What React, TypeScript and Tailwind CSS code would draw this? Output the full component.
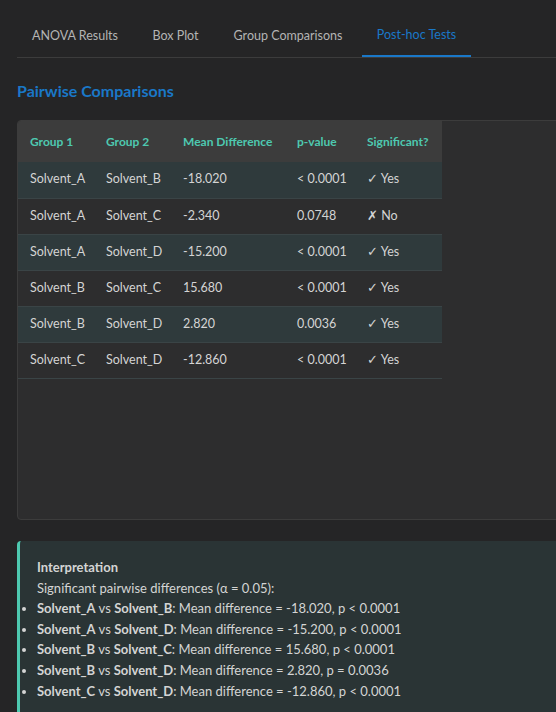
import React from "react";

const rows = [
  ["Solvent_A", "Solvent_B", "-18.020", "< 0.0001", true],
  ["Solvent_A", "Solvent_C", "-2.340", "0.0748", false],
  ["Solvent_A", "Solvent_D", "-15.200", "< 0.0001", true],
  ["Solvent_B", "Solvent_C", "15.680", "< 0.0001", true],
  ["Solvent_B", "Solvent_D", "2.820", "0.0036", true],
  ["Solvent_C", "Solvent_D", "-12.860", "< 0.0001", true],
] as const;

const interp = [
  ["Solvent_A", "Solvent_B", "-18.020", "p < 0.0001"],
  ["Solvent_A", "Solvent_D", "-15.200", "p < 0.0001"],
  ["Solvent_B", "Solvent_C", "15.680", "p < 0.0001"],
  ["Solvent_B", "Solvent_D", "2.820", "p = 0.0036"],
  ["Solvent_C", "Solvent_D", "-12.860", "p < 0.0001"],
];

export default function App() {
  const tabs = [
    ["ANOVA Results", "w-[116px]"],
    ["Box Plot", "w-[77px]"],
    ["Group Comparisons", "w-[140px]"],
    ["Post-hoc Tests", "w-[109px]"],
  ];
  return (
    <div
      className="w-[556px] h-[712px] overflow-hidden bg-[#252526] text-[#d4d4d4]"
      style={{ fontFamily: '"Segoe UI", Lato, "Noto Sans", sans-serif' }}
    >
      <div className="pl-[17px] pt-5 w-[700px]">
        <div className="flex gap-1 border-b border-[#3c3c3c]">
          {tabs.map(([t, w], i) => (
            <div
              key={t}
              className={
                i === 3
                  ? `${w} h-[37px] pb-[5px] flex items-center justify-center text-[12.5px] text-[#1a78c8] border-b-2 border-[#1a78c8] -mb-px`
                  : `${w} h-[37px] pb-[5px] flex items-center justify-center text-[12.5px] text-[#b4b4b4]`
              }
            >
              {t}
            </div>
          ))}
        </div>
        <h2 className="mt-[21px] text-[16px] font-bold text-[#1a78c8] leading-[24px]">
          Pairwise Comparisons
        </h2>
        <div className="mt-[17px] h-[400px] rounded border border-[#3c3c3c] bg-[#2d2d2e] overflow-hidden">
          <table className="border-collapse table-fixed w-[424px] text-[12.5px]">
            <colgroup>
              <col className="w-[76px]" />
              <col className="w-[77px]" />
              <col className="w-[114px]" />
              <col className="w-[70px]" />
              <col className="w-[87px]" />
            </colgroup>
            <thead>
              <tr className="bg-[#3c3c3c] h-[41px]">
                {["Group 1", "Group 2", "Mean Difference", "p-value", "Significant?"].map((h) => (
                  <th key={h} className="text-left px-3 font-bold text-[12px] text-[#4ec9b0] whitespace-nowrap">
                    {h}
                  </th>
                ))}
              </tr>
            </thead>
            <tbody>
              {rows.map((r, i) => (
                <tr
                  key={i}
                  className={
                    i % 2 === 0
                      ? "h-[36px] bg-[#2f3a3c] border-b border-[#3a4446]"
                      : "h-[36px] bg-[#2d2d2e] border-b border-[#3a4446]"
                  }
                >
                  <td className="px-3 whitespace-nowrap">{r[0]}</td>
                  <td className="px-3 whitespace-nowrap">{r[1]}</td>
                  <td className="px-3 whitespace-nowrap">{r[2]}</td>
                  <td className="px-3 whitespace-nowrap">{r[3]}</td>
                  <td className="px-3 whitespace-nowrap">{r[4] ? "✓ Yes" : "✗ No"}</td>
                </tr>
              ))}
            </tbody>
          </table>
        </div>
        <div className="mt-[21px] rounded-l border-l-[3px] border-[#4ec9b0] bg-[#2a3435] pl-[17px] pt-[16px] pb-4 text-[13px] leading-[20.6px]">
          <div className="font-bold">Interpretation</div>
          <div>Significant pairwise differences (α = 0.05):</div>
          <ul className="list-disc pl-0">
            {interp.map((l, i) => (
              <li key={i}>
                <b>{l[0]}</b> vs <b>{l[1]}</b>: Mean difference = {l[2]}, {l[3]}
              </li>
            ))}
          </ul>
        </div>
      </div>
    </div>
  );
}
